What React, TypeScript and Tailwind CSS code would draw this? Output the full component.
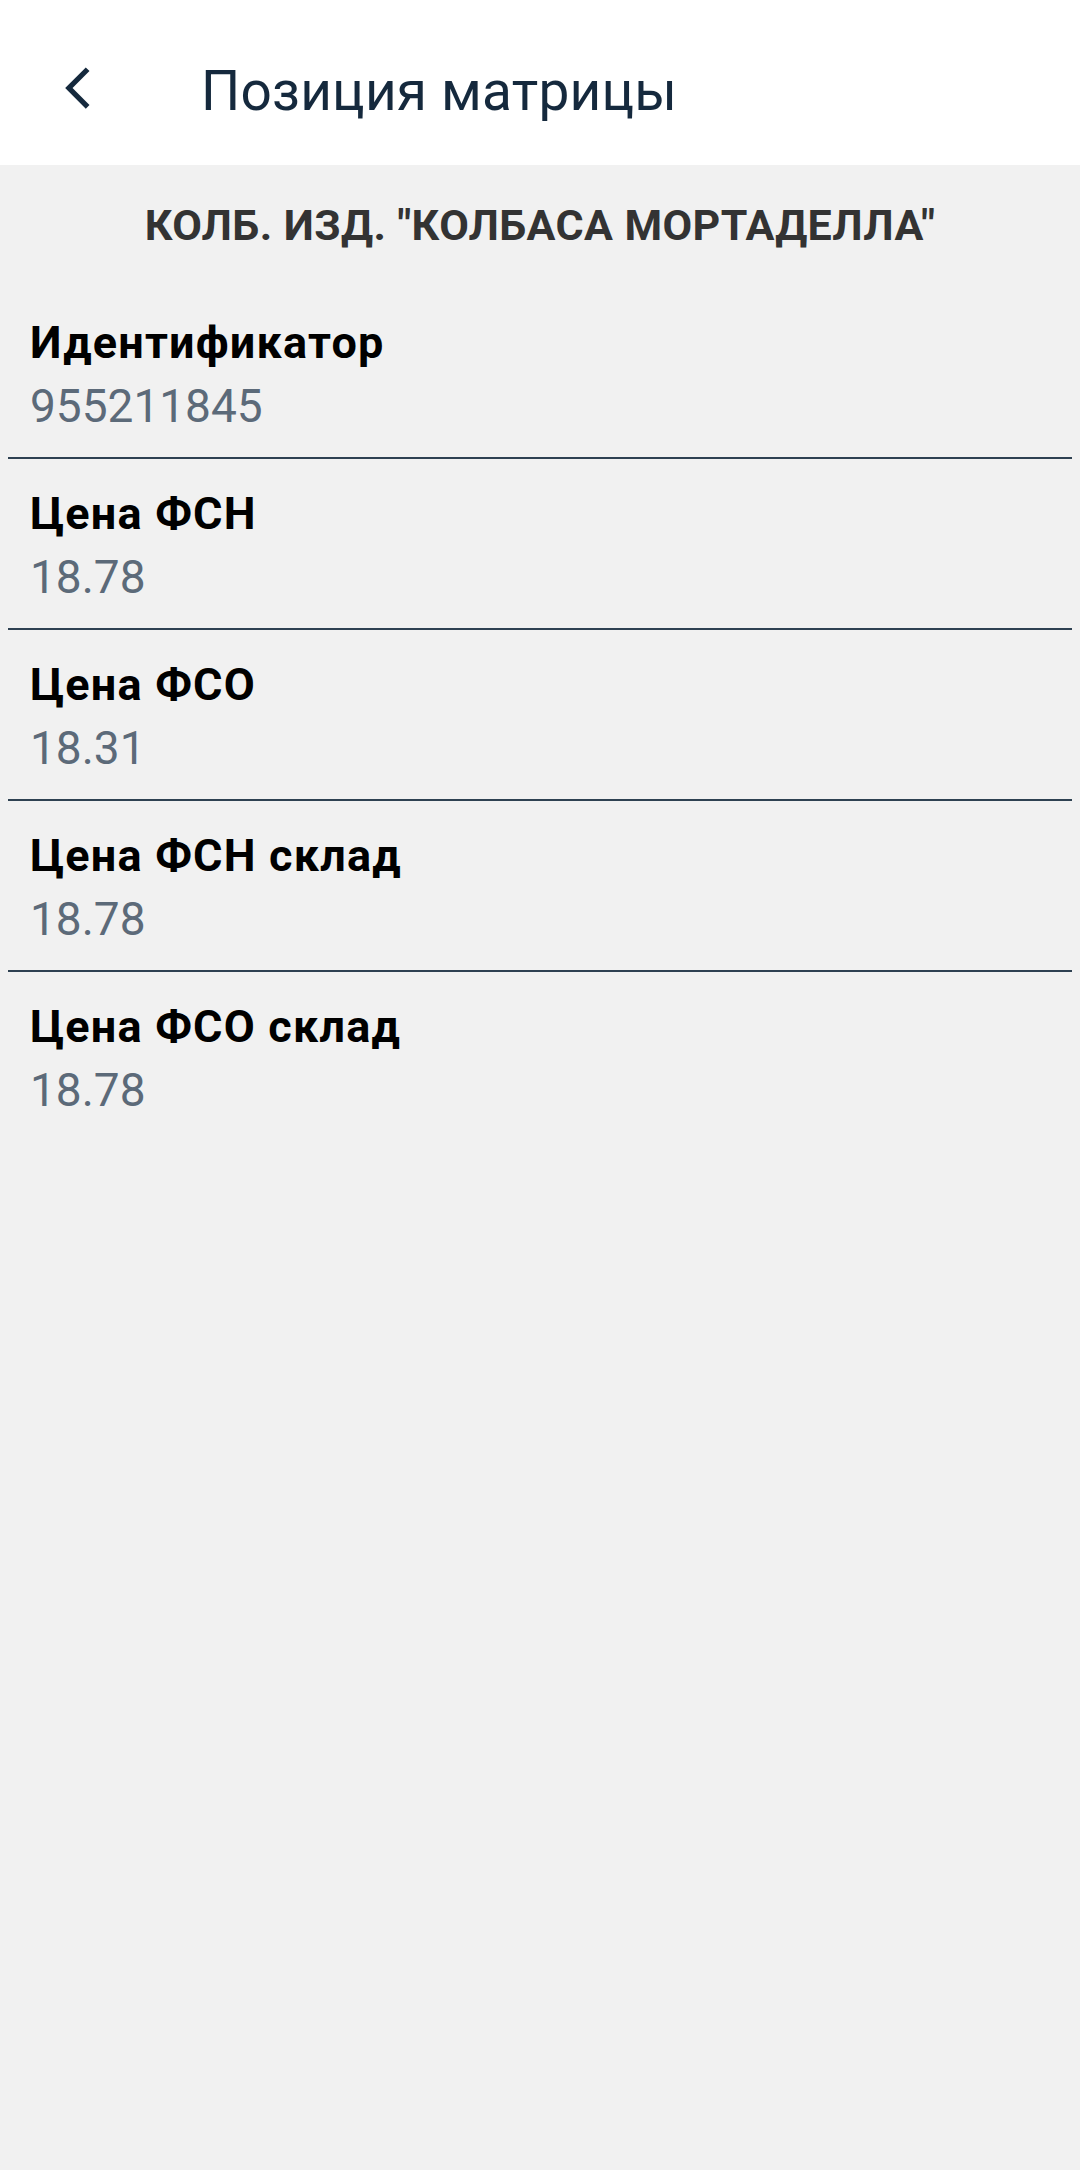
// Matrix position details screen
const FIELDS = [
    { label: 'Идентификатор', value: '955211845' },
    { label: 'Цена ФСН', value: '18.78' },
    { label: 'Цена ФСО', value: '18.31' },
    { label: 'Цена ФСН склад', value: '18.78' },
    { label: 'Цена ФСО склад', value: '18.78' },
];

function BackIcon() {
    return (
        <svg viewBox="0 0 24 24" className="w-[50px] h-[50px]" fill="#15293d">
            <path d="M17.51 3.87L15.73 2.1 5.84 12l9.9 9.9 1.77-1.77L9.38 12l8.13-8.13z" />
        </svg>
    );
}

export default function App() {
    return (
        <div
            className="min-h-screen bg-[#f1f1f1]"
            style={{ fontFamily: 'Roboto, "Noto Sans", sans-serif' }}
        >
            <header className="h-[165px] bg-white flex items-start pt-[59px]">
                <button className="ml-[53px] mt-[4px] w-[50px] h-[50px] flex items-center justify-center">
                    <BackIcon />
                </button>
                <h1 className="ml-[98px] text-[55px] leading-[64px] tracking-[0.2px] text-[#15293d] font-normal">
                    Позиция матрицы
                </h1>
            </header>

            <div className="pt-[30px] text-center">
                <h2 className="text-[43px] leading-[60px] tracking-[0.4px] font-bold text-[#333333] uppercase">
                    КОЛБ. ИЗД. "КОЛБАСА МОРТАДЕЛЛА"
                </h2>
            </div>

            <ul className="mt-[33px] px-[8px]">
                {FIELDS.map((field, index) => (
                    <li key={index}>
                        <div className="pl-[22px] pt-[29px] pb-[23px]">
                            <div className="text-[45px] leading-[52px] tracking-[1.2px] font-bold text-black">
                                {field.label}
                            </div>
                            <div className="mt-[9px] text-[46px] leading-[56px] text-[#5c6a79]">
                                {field.value}
                            </div>
                        </div>
                        {index < FIELDS.length - 1 && (
                            <div className="h-[2px] bg-[#2e4152]"></div>
                        )}
                    </li>
                ))}
            </ul>
        </div>
    );
}
